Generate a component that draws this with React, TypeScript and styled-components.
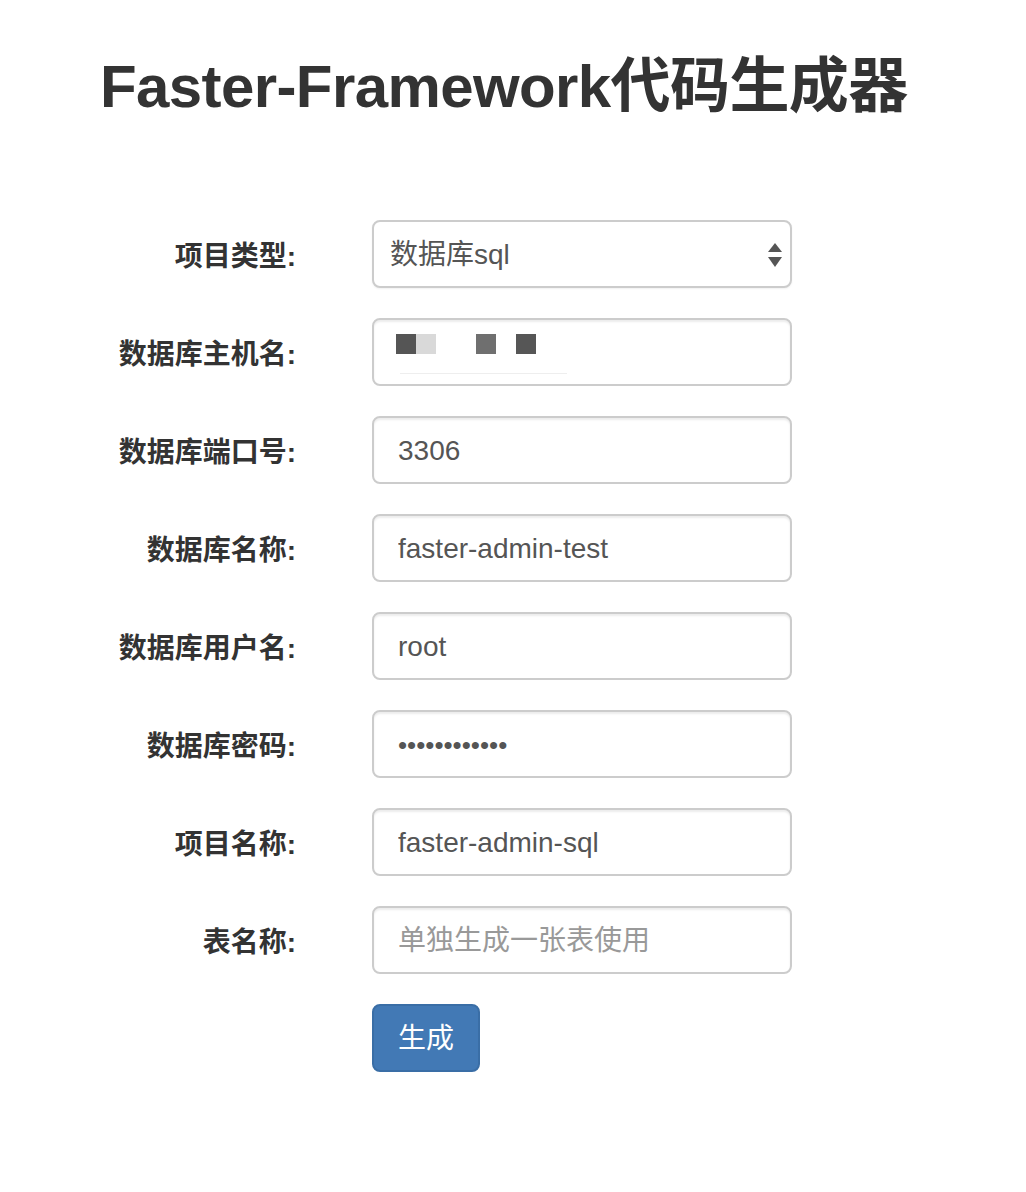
import React from "react";
import styled, { createGlobalStyle } from "styled-components";

const GlobalStyle = createGlobalStyle`
  html, body {
    margin: 0;
    padding: 0;
    background: #ffffff;
  }
  body {
    font-family: "Liberation Sans", "Noto Sans CJK SC", sans-serif;
    color: #333333;
  }
`;

type Field = {
  label: string;
  value?: string;
  placeholder?: string;
  kind?: "text" | "password" | "masked";
};

const fields: Field[] = [
  { label: "数据库主机名:", kind: "masked" },
  { label: "数据库端口号:", value: "3306" },
  { label: "数据库名称:", value: "faster-admin-test" },
  { label: "数据库用户名:", value: "root" },
  { label: "数据库密码:", value: "••••••••••••", kind: "password" },
  { label: "项目名称:", value: "faster-admin-sql" },
  { label: "表名称:", placeholder: "单独生成一张表使用" },
];

const App: React.FC = () => {
  return (
    <Page>
      <GlobalStyle />
      <Title>Faster-Framework代码生成器</Title>
      <Form onSubmit={(e) => e.preventDefault()}>
        <Row>
          <Label>项目类型:</Label>
          <Control>
            <Select defaultValue="sql">
              <option value="sql">数据库sql</option>
            </Select>
            <Arrows width="14" height="24" viewBox="0 0 14 24">
              <path d="M7 0 L14 9 L0 9 Z" fill="#555" />
              <path d="M0 14 L14 14 L7 24 Z" fill="#555" />
            </Arrows>
          </Control>
        </Row>
        {fields.map((f) => (
          <Row key={f.label}>
            <Label>{f.label}</Label>
            <Control>
              <Input
                type="text"
                defaultValue={f.value}
                placeholder={f.placeholder}
                $dots={f.kind === "password"}
                readOnly
              />
              {f.kind === "masked" && (
                <Mosaic>
                  <Block $c="#555555" $x={24} />
                  <Block $c="#d9d9d9" $x={44} />
                  <Block $c="#6f6f6f" $x={104} />
                  <Block $c="#565656" $x={144} />
                  <Underline />
                </Mosaic>
              )}
            </Control>
          </Row>
        ))}
        <Row>
          <span />
          <div>
            <Button type="submit">生成</Button>
          </div>
        </Row>
      </Form>
    </Page>
  );
};

const Page = styled.div`
  padding: 54px 0 120px;
`;

const Title = styled.h2`
  margin: 0 0 100px 100px;
  font-size: 60px;
  line-height: 66px;
  font-weight: 700;
  letter-spacing: -0.6px;
  color: #333333;
  white-space: nowrap;
`;

const Form = styled.form`
  display: grid;
  row-gap: 30px;
`;

const Row = styled.div`
  display: grid;
  grid-template-columns: 296px 420px;
  column-gap: 76px;
  align-items: center;
`;

const Label = styled.label`
  box-sizing: border-box;
  height: 68px;
  padding-top: 6px;
  text-align: right;
  font-size: 28px;
  line-height: 62px;
  font-weight: 700;
  color: #333333;
  white-space: nowrap;
`;

const Control = styled.div`
  position: relative;
  width: 420px;
`;

const fieldBase = `
  display: block;
  box-sizing: border-box;
  width: 420px;
  height: 68px;
  border: 2px solid #cccccc;
  border-radius: 8px;
  background: #ffffff;
  font-family: "Liberation Sans", "Noto Sans CJK SC", sans-serif;
  font-size: 28px;
  color: #555555;
  box-shadow: inset 0 2px 2px rgba(0, 0, 0, 0.075);
  outline: none;
  margin: 0;
`;

const Input = styled.input<{ $dots?: boolean }>`
  ${fieldBase}
  padding: 13px 24px 11px;
  letter-spacing: 0;
  font-size: ${(p) => (p.$dots ? "26px" : "28px")};

  &::placeholder {
    color: #999999;
  }
`;

const Select = styled.select`
  ${fieldBase}
  appearance: none;
  -webkit-appearance: none;
  padding: 1px 40px 0 16px;
  box-shadow: 0 1px 2px rgba(0, 0, 0, 0.06);
`;

const Arrows = styled.svg`
  position: absolute;
  right: 10px;
  top: 23px;
  pointer-events: none;
`;

const Mosaic = styled.div`
  position: absolute;
  inset: 0;
  pointer-events: none;
`;

const Block = styled.span<{ $c: string; $x: number }>`
  position: absolute;
  top: 16px;
  left: ${(p) => p.$x}px;
  width: 20px;
  height: 20px;
  background: ${(p) => p.$c};
`;

const Underline = styled.span`
  position: absolute;
  top: 55px;
  left: 28px;
  width: 167px;
  height: 1px;
  background: #eeeeee;
`;

const Button = styled.button`
  box-sizing: border-box;
  height: 68px;
  padding: 13px 24px 11px;
  border: 2px solid #3a6ea6;
  border-radius: 8px;
  background: #4279b5;
  color: #ffffff;
  font-family: "Liberation Sans", "Noto Sans CJK SC", sans-serif;
  font-size: 28px;
  line-height: 40px;
  cursor: pointer;
`;

export default App;
